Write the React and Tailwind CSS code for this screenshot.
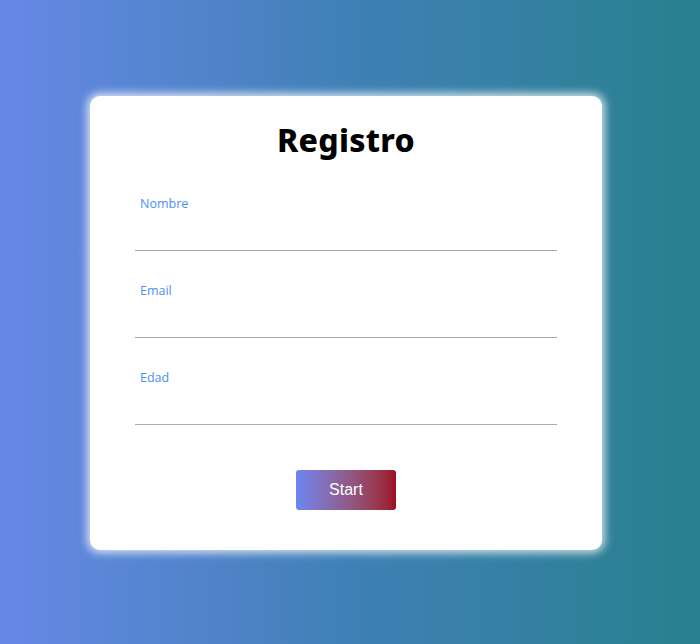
import React from "react";

const fields = ["Nombre", "Email", "Edad"];

function App() {
  return (
    <div
      className="w-[700px] h-[644px] flex items-start bg-gradient-to-r from-[#6688e6] via-[#3f80b6] to-[#28808e]"
      style={{ fontFamily: '"Open Sans", "Liberation Sans", sans-serif' }}
    >
      <div className="ml-[90px] mt-[96px] w-[512px] h-[454px] bg-white rounded-[10px] shadow-[0_0_8px_3px_rgba(255,255,255,0.75)] pt-[22px] px-[45px] flex flex-col">
        <h1
          className="text-center text-[32px] leading-[44px] font-extrabold text-black tracking-[0.3px]"
          style={{ fontFamily: '"Noto Sans", "Open Sans", sans-serif' }}
        >
          Registro
        </h1>
        <form className="mt-[2px] flex flex-col">
          {fields.map((f) => (
            <label key={f} className="block pt-[31px]">
              <span className="block pl-[5px] text-[12.5px] leading-[18px] text-[#4a90f0]">{f}</span>
              <input type="text" className="block w-full h-[38px] outline-none border-b border-[#a9a9a9]" />
            </label>
          ))}
        </form>
        <div className="mt-[45px] flex justify-center">
          <button
            type="button"
            className="w-[100px] h-[40px] rounded-[3px] text-white text-[16px] bg-gradient-to-r from-[#6b86f2] to-[#9c0c26]"
            style={{ fontFamily: '"Liberation Sans", Arial, sans-serif' }}
          >
            Start
          </button>
        </div>
      </div>
    </div>
  );
}

export default App;
